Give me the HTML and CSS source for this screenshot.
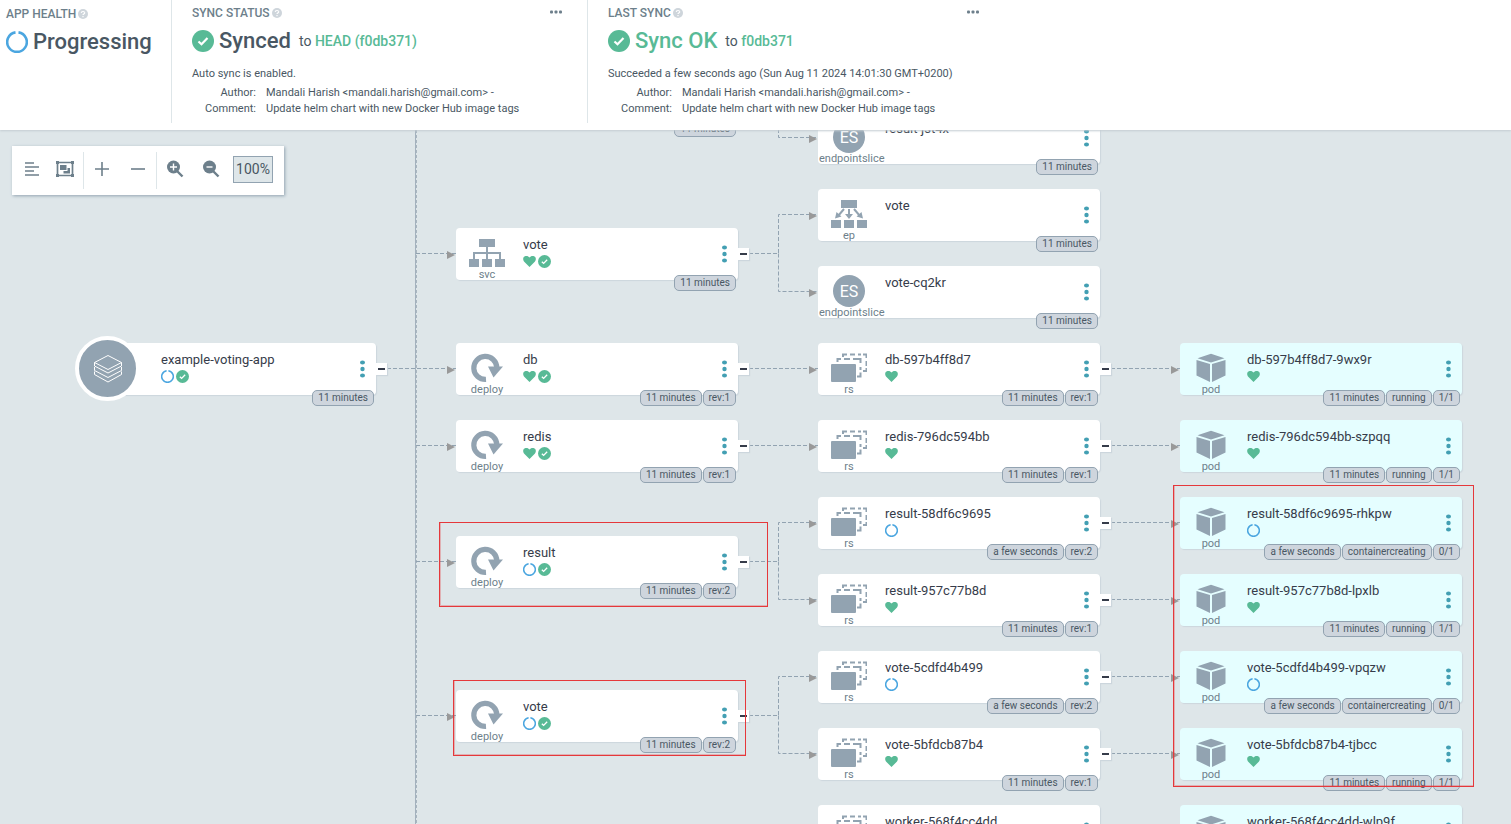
FILE: index.html
```html
<!DOCTYPE html>
<html lang="en">
<head>
<meta charset="utf-8">
<title>example-voting-app</title>
<link rel="stylesheet" href="styles.css">
</head>
<body>
<svg class="sprite" aria-hidden="true">
  <symbol id="i-heart" viewBox="0 0 13 13"><path fill="#58ba96" d="M6.500 12 L1 6.500 C-.5 4.500 0 1.500 2.500 1 C4.200 .7 5.700 1.300 6.500 2.500 C7.300 1.300 8.800 .7 10.500 1 C13 1.500 13.500 4.500 12 6.500 Z"/></symbol>
  <symbol id="i-check" viewBox="0 0 22 22"><circle cx="11" cy="11" r="11" fill="#58ba96"/><path d="M6.500 11.500 L9.500 14.300 L15.500 8" fill="none" stroke="#fff" stroke-width="2.200"/></symbol>
  <symbol id="i-ring" viewBox="0 0 22 22"><path d="M12.500 1.400 A9.800 9.800 0 1 1 9.500 1.400" fill="none" stroke="#4ba6e0" stroke-width="2.600"/></symbol>
  <symbol id="i-help" viewBox="0 0 10 10"><circle cx="5" cy="5" r="5" fill="#ced5db"/><path d="M3.200 3.900 C3.400 2 6.800 2.100 6.700 3.900 C6.600 5 5 4.900 5 6" fill="none" stroke="#fff" stroke-width="1.200"/><rect x="4.400" y="7" width="1.200" height="1.200" fill="#fff"/></symbol>
  <symbol id="i-more" viewBox="0 0 12 4"><g fill="#6d7f8b"><rect y=".5" width="3" height="3" rx="1"/><rect x="4.500" y=".5" width="3" height="3" rx="1"/><rect x="9" y=".5" width="3" height="3" rx="1"/></g></symbol>
  <symbol id="i-kebab" viewBox="0 0 5 18"><g fill="#439fb3"><ellipse cx="2.500" cy="2.500" rx="2.500" ry="2.100"/><circle cx="2.500" cy="9" r="2.200"/><ellipse cx="2.500" cy="15.500" rx="2.500" ry="2.100"/></g></symbol>
  <symbol id="i-svc" viewBox="0 0 36 30"><g fill="#92a3b1"><rect x="10" y="1" width="16" height="8"/><rect y="21" width="10" height="8"/><rect x="13" y="21" width="10" height="8"/><rect x="26" y="21" width="10" height="8"/></g><path d="M18 9 V21 M5 21 V15 H31 V21" fill="none" stroke="#92a3b1" stroke-width="2"/></symbol>
  <symbol id="i-ep" viewBox="0 0 36 30"><g fill="#92a3b1"><rect x="10" y="1" width="16" height="8"/><rect y="21" width="10" height="8"/><rect x="13" y="21" width="10" height="8"/><rect x="26" y="21" width="10" height="8"/><path d="M4 19.500 L5.500 13 L10.500 17.500 Z M32 19.500 L30.500 13 L25.500 17.500 Z M18 20 L14 15 H22 Z"/></g><path d="M13 10 L7 17 M23 10 L29 17 M18 10 V17" fill="none" stroke="#92a3b1" stroke-width="2"/></symbol>
  <symbol id="i-deploy" viewBox="0 0 36 30"><path d="M17 26.400 A11.500 11.500 0 1 1 27.800 14.500" fill="none" stroke="#92a3b1" stroke-width="5.200"/><path d="M19 13.500 H34 L24.500 24.500 Z" fill="#92a3b1"/></symbol>
  <symbol id="i-rs" viewBox="0 0 36 30"><rect y="11" width="25" height="18" rx="1" fill="#92a3b1"/><g fill="none" stroke="#92a3b1" stroke-width="2"><path d="M6.500 9 V6 H10 M13 6 H19 M22 6 H29.500 V10 M29.500 14 V17 M26 23.500 H29.500 V19.500"/><path d="M12 4 V1.500 H16 M19 1.500 H24 M27 1.500 H30 M32 1.500 H35.500 V5 M35.500 8 V13 M35.500 15 V18 H32"/></g></symbol>
  <symbol id="i-pod" viewBox="0 0 36 30"><path fill="#92a3b1" d="M18 .8 L31.500 5.300 L18 9.500 L4.500 5.300 Z M3.500 7 L17 11 V29 L3.500 22.500 Z M32.500 7 L19 11 V29 L32.500 22.500 Z"/></symbol>
  <symbol id="i-app" viewBox="0 0 30 30"><g fill="none" stroke="#fff"><path d="M15 1.500 L28.500 8.500 L15 15.500 L1.500 8.500 Z"/><path d="M1.500 8.500 V12 L15 19 L28.500 12 V8.500 M1.500 13 V16.500 L15 23.500 L28.500 16.500 V13 M1.500 17.500 V20.500 L15 28 L28.500 20.500 V17.500"/></g></symbol>
</svg>

<header class="status">
  <section class="panel panel-health">
    <h2 class="panel-title">APP HEALTH<svg class="help"><use href="#i-help"/></svg></h2>
    <div class="state"><svg class="state-icon"><use href="#i-ring"/></svg><span class="state-name">Progressing</span></div>
  </section>
  <section class="panel">
    <div class="panel-head"><h2 class="panel-title">SYNC STATUS<svg class="help"><use href="#i-help"/></svg></h2><button class="plain" aria-label="More"><svg class="more"><use href="#i-more"/></svg></button></div>
    <div class="state"><svg class="state-icon"><use href="#i-check"/></svg><span class="state-name">Synced</span><span class="target">to <a href="#">HEAD (f0db371)</a></span></div>
    <p class="note">Auto sync is enabled.</p>
    <dl class="meta"><dt>Author:</dt><dd>Mandali Harish &lt;mandali.harish@gmail.com&gt; -</dd><dt>Comment:</dt><dd>Update helm chart with new Docker Hub image tags</dd></dl>
  </section>
  <section class="panel">
    <div class="panel-head"><h2 class="panel-title">LAST SYNC<svg class="help"><use href="#i-help"/></svg></h2><button class="plain" aria-label="More"><svg class="more"><use href="#i-more"/></svg></button></div>
    <div class="state"><svg class="state-icon"><use href="#i-check"/></svg><span class="state-name ok">Sync OK</span><span class="target">to <a href="#">f0db371</a></span></div>
    <p class="note">Succeeded a few seconds ago (Sun Aug 11 2024 14:01:30 GMT+0200)</p>
    <dl class="meta"><dt>Author:</dt><dd>Mandali Harish &lt;mandali.harish@gmail.com&gt; -</dd><dt>Comment:</dt><dd>Update helm chart with new Docker Hub image tags</dd></dl>
  </section>
</header>

<main class="graph">
  <svg class="edges" aria-hidden="true">
    <defs><marker id="arrow" markerUnits="userSpaceOnUse" markerWidth="8" markerHeight="8" refX="0" refY="4" orient="auto"><path d="M0 0 L8 4 L0 8 Z" fill="#999"/></marker></defs>
    <path class="trunk" d="M415.500 0 V694"/>
    <path class="trunk trunk-dash" d="M416.500 0 V694"/>
    <g class="lines" transform="translate(0 -1)">
      <path d="M387 239.500 H456"/><path d="M416 124.500 H456"/><path d="M416 316.500 H456"/><path d="M416 432.500 H456"/><path d="M416 586.500 H456"/>
      <path d="M778.500 0 V8.500 H818"/>
      <path d="M749 124.500 H778.500 V85.500 H818"/><path d="M778.500 124.500 V162.500 H818"/>
      <path d="M749 239.500 H818"/><path d="M749 316.500 H818"/>
      <path d="M749 432.500 H778.500 V393.500 H818"/><path d="M778.500 432.500 V470.500 H818"/>
      <path d="M749 586.500 H778.500 V547.500 H818"/><path d="M778.500 586.500 V624.500 H818"/>
      <path d="M1111 239.500 H1180"/><path d="M1111 316.500 H1180"/><path d="M1111 393.500 H1180"/><path d="M1111 470.500 H1180"/><path d="M1111 547.500 H1180"/><path d="M1111 624.500 H1180"/>
    </g>
    <g class="heads">
      <path d="M447 125 h.1"/><path d="M447 240 h.1"/><path d="M447 317 h.1"/><path d="M447 433 h.1"/><path d="M447 587 h.1"/>
      <path d="M809 9 h.1"/><path d="M809 86 h.1"/><path d="M809 163 h.1"/><path d="M809 240 h.1"/><path d="M809 317 h.1"/><path d="M809 394 h.1"/><path d="M809 471 h.1"/><path d="M809 548 h.1"/><path d="M809 625 h.1"/>
      <path d="M1171 240 h.1"/><path d="M1171 317 h.1"/><path d="M1171 394 h.1"/><path d="M1171 471 h.1"/><path d="M1171 548 h.1"/><path d="M1171 625 h.1"/>
    </g>
  </svg>

  <article class="node" style="left:94px;top:213px">
    <div class="app-badge"><svg class="app-icon"><use href="#i-app"/></svg></div>
    <div class="kind"></div>
    <div class="info"><span class="name">example-voting-app</span><span class="marks"><svg><use href="#i-ring"/></svg><svg><use href="#i-check"/></svg></span></div>
    <button class="plain" aria-label="Actions"><svg class="kebab"><use href="#i-kebab"/></svg></button><button class="fold" aria-label="Collapse"></button>
    <div class="tags"><span>11 minutes</span></div>
  </article>

  <article class="node" style="left:456px;top:-56px">
    <div class="tags"><span>11 minutes</span></div>
  </article>
  <article class="node" style="left:456px;top:98px">
    <div class="kind"><svg class="kind-icon"><use href="#i-svc"/></svg><span>svc</span></div>
    <div class="info"><span class="name">vote</span><span class="marks"><svg><use href="#i-heart"/></svg><svg><use href="#i-check"/></svg></span></div>
    <button class="plain" aria-label="Actions"><svg class="kebab"><use href="#i-kebab"/></svg></button><button class="fold" aria-label="Collapse"></button>
    <div class="tags"><span>11 minutes</span></div>
  </article>
  <article class="node" style="left:456px;top:213px">
    <div class="kind"><svg class="kind-icon"><use href="#i-deploy"/></svg><span>deploy</span></div>
    <div class="info"><span class="name">db</span><span class="marks"><svg><use href="#i-heart"/></svg><svg><use href="#i-check"/></svg></span></div>
    <button class="plain" aria-label="Actions"><svg class="kebab"><use href="#i-kebab"/></svg></button><button class="fold" aria-label="Collapse"></button>
    <div class="tags"><span>11 minutes</span><span>rev:1</span></div>
  </article>
  <article class="node" style="left:456px;top:290px">
    <div class="kind"><svg class="kind-icon"><use href="#i-deploy"/></svg><span>deploy</span></div>
    <div class="info"><span class="name">redis</span><span class="marks"><svg><use href="#i-heart"/></svg><svg><use href="#i-check"/></svg></span></div>
    <button class="plain" aria-label="Actions"><svg class="kebab"><use href="#i-kebab"/></svg></button><button class="fold" aria-label="Collapse"></button>
    <div class="tags"><span>11 minutes</span><span>rev:1</span></div>
  </article>
  <article class="node" style="left:456px;top:406px">
    <div class="kind"><svg class="kind-icon"><use href="#i-deploy"/></svg><span>deploy</span></div>
    <div class="info"><span class="name">result</span><span class="marks"><svg><use href="#i-ring"/></svg><svg><use href="#i-check"/></svg></span></div>
    <button class="plain" aria-label="Actions"><svg class="kebab"><use href="#i-kebab"/></svg></button><button class="fold" aria-label="Collapse"></button>
    <div class="tags"><span>11 minutes</span><span>rev:2</span></div>
  </article>
  <article class="node" style="left:456px;top:560px">
    <div class="kind"><svg class="kind-icon"><use href="#i-deploy"/></svg><span>deploy</span></div>
    <div class="info"><span class="name">vote</span><span class="marks"><svg><use href="#i-ring"/></svg><svg><use href="#i-check"/></svg></span></div>
    <button class="plain" aria-label="Actions"><svg class="kebab"><use href="#i-kebab"/></svg></button><button class="fold" aria-label="Collapse"></button>
    <div class="tags"><span>11 minutes</span><span>rev:2</span></div>
  </article>

  <article class="node" style="left:818px;top:-18px">
    <div class="kind"><b class="initials">ES</b><span>endpointslice</span></div>
    <div class="info"><span class="name">result-jst4x</span></div>
    <button class="plain" aria-label="Actions"><svg class="kebab"><use href="#i-kebab"/></svg></button>
    <div class="tags"><span>11 minutes</span></div>
  </article>
  <article class="node" style="left:818px;top:59px">
    <div class="kind"><svg class="kind-icon"><use href="#i-ep"/></svg><span>ep</span></div>
    <div class="info"><span class="name">vote</span></div>
    <button class="plain" aria-label="Actions"><svg class="kebab"><use href="#i-kebab"/></svg></button>
    <div class="tags"><span>11 minutes</span></div>
  </article>
  <article class="node" style="left:818px;top:136px">
    <div class="kind"><b class="initials">ES</b><span>endpointslice</span></div>
    <div class="info"><span class="name">vote-cq2kr</span></div>
    <button class="plain" aria-label="Actions"><svg class="kebab"><use href="#i-kebab"/></svg></button>
    <div class="tags"><span>11 minutes</span></div>
  </article>
  <article class="node" style="left:818px;top:213px">
    <div class="kind"><svg class="kind-icon"><use href="#i-rs"/></svg><span>rs</span></div>
    <div class="info"><span class="name">db-597b4ff8d7</span><span class="marks"><svg><use href="#i-heart"/></svg></span></div>
    <button class="plain" aria-label="Actions"><svg class="kebab"><use href="#i-kebab"/></svg></button><button class="fold" aria-label="Collapse"></button>
    <div class="tags"><span>11 minutes</span><span>rev:1</span></div>
  </article>
  <article class="node" style="left:818px;top:290px">
    <div class="kind"><svg class="kind-icon"><use href="#i-rs"/></svg><span>rs</span></div>
    <div class="info"><span class="name">redis-796dc594bb</span><span class="marks"><svg><use href="#i-heart"/></svg></span></div>
    <button class="plain" aria-label="Actions"><svg class="kebab"><use href="#i-kebab"/></svg></button><button class="fold" aria-label="Collapse"></button>
    <div class="tags"><span>11 minutes</span><span>rev:1</span></div>
  </article>
  <article class="node" style="left:818px;top:367px">
    <div class="kind"><svg class="kind-icon"><use href="#i-rs"/></svg><span>rs</span></div>
    <div class="info"><span class="name">result-58df6c9695</span><span class="marks"><svg><use href="#i-ring"/></svg></span></div>
    <button class="plain" aria-label="Actions"><svg class="kebab"><use href="#i-kebab"/></svg></button><button class="fold" aria-label="Collapse"></button>
    <div class="tags"><span>a few seconds</span><span>rev:2</span></div>
  </article>
  <article class="node" style="left:818px;top:444px">
    <div class="kind"><svg class="kind-icon"><use href="#i-rs"/></svg><span>rs</span></div>
    <div class="info"><span class="name">result-957c77b8d</span><span class="marks"><svg><use href="#i-heart"/></svg></span></div>
    <button class="plain" aria-label="Actions"><svg class="kebab"><use href="#i-kebab"/></svg></button><button class="fold" aria-label="Collapse"></button>
    <div class="tags"><span>11 minutes</span><span>rev:1</span></div>
  </article>
  <article class="node" style="left:818px;top:521px">
    <div class="kind"><svg class="kind-icon"><use href="#i-rs"/></svg><span>rs</span></div>
    <div class="info"><span class="name">vote-5cdfd4b499</span><span class="marks"><svg><use href="#i-ring"/></svg></span></div>
    <button class="plain" aria-label="Actions"><svg class="kebab"><use href="#i-kebab"/></svg></button><button class="fold" aria-label="Collapse"></button>
    <div class="tags"><span>a few seconds</span><span>rev:2</span></div>
  </article>
  <article class="node" style="left:818px;top:598px">
    <div class="kind"><svg class="kind-icon"><use href="#i-rs"/></svg><span>rs</span></div>
    <div class="info"><span class="name">vote-5bfdcb87b4</span><span class="marks"><svg><use href="#i-heart"/></svg></span></div>
    <button class="plain" aria-label="Actions"><svg class="kebab"><use href="#i-kebab"/></svg></button><button class="fold" aria-label="Collapse"></button>
    <div class="tags"><span>11 minutes</span><span>rev:1</span></div>
  </article>
  <article class="node" style="left:818px;top:675px">
    <div class="kind"><svg class="kind-icon"><use href="#i-rs"/></svg></div>
    <div class="info"><span class="name">worker-568f4cc4dd</span></div>
    <button class="plain" aria-label="Actions"><svg class="kebab"><use href="#i-kebab"/></svg></button>
  </article>

  <article class="node pod" style="left:1180px;top:213px">
    <div class="kind"><svg class="kind-icon"><use href="#i-pod"/></svg><span>pod</span></div>
    <div class="info"><span class="name">db-597b4ff8d7-9wx9r</span><span class="marks"><svg><use href="#i-heart"/></svg></span></div>
    <button class="plain" aria-label="Actions"><svg class="kebab"><use href="#i-kebab"/></svg></button>
    <div class="tags"><span>11 minutes</span><span>running</span><span>1/1</span></div>
  </article>
  <article class="node pod" style="left:1180px;top:290px">
    <div class="kind"><svg class="kind-icon"><use href="#i-pod"/></svg><span>pod</span></div>
    <div class="info"><span class="name">redis-796dc594bb-szpqq</span><span class="marks"><svg><use href="#i-heart"/></svg></span></div>
    <button class="plain" aria-label="Actions"><svg class="kebab"><use href="#i-kebab"/></svg></button>
    <div class="tags"><span>11 minutes</span><span>running</span><span>1/1</span></div>
  </article>
  <article class="node pod" style="left:1180px;top:367px">
    <div class="kind"><svg class="kind-icon"><use href="#i-pod"/></svg><span>pod</span></div>
    <div class="info"><span class="name">result-58df6c9695-rhkpw</span><span class="marks"><svg><use href="#i-ring"/></svg></span></div>
    <button class="plain" aria-label="Actions"><svg class="kebab"><use href="#i-kebab"/></svg></button>
    <div class="tags"><span>a few seconds</span><span>containercreating</span><span>0/1</span></div>
  </article>
  <article class="node pod" style="left:1180px;top:444px">
    <div class="kind"><svg class="kind-icon"><use href="#i-pod"/></svg><span>pod</span></div>
    <div class="info"><span class="name">result-957c77b8d-lpxlb</span><span class="marks"><svg><use href="#i-heart"/></svg></span></div>
    <button class="plain" aria-label="Actions"><svg class="kebab"><use href="#i-kebab"/></svg></button>
    <div class="tags"><span>11 minutes</span><span>running</span><span>1/1</span></div>
  </article>
  <article class="node pod" style="left:1180px;top:521px">
    <div class="kind"><svg class="kind-icon"><use href="#i-pod"/></svg><span>pod</span></div>
    <div class="info"><span class="name">vote-5cdfd4b499-vpqzw</span><span class="marks"><svg><use href="#i-ring"/></svg></span></div>
    <button class="plain" aria-label="Actions"><svg class="kebab"><use href="#i-kebab"/></svg></button>
    <div class="tags"><span>a few seconds</span><span>containercreating</span><span>0/1</span></div>
  </article>
  <article class="node pod" style="left:1180px;top:598px">
    <div class="kind"><svg class="kind-icon"><use href="#i-pod"/></svg><span>pod</span></div>
    <div class="info"><span class="name">vote-5bfdcb87b4-tjbcc</span><span class="marks"><svg><use href="#i-heart"/></svg></span></div>
    <button class="plain" aria-label="Actions"><svg class="kebab"><use href="#i-kebab"/></svg></button>
    <div class="tags"><span>11 minutes</span><span>running</span><span>1/1</span></div>
  </article>
  <article class="node pod" style="left:1180px;top:675px">
    <div class="kind"><svg class="kind-icon"><use href="#i-pod"/></svg></div>
    <div class="info"><span class="name">worker-568f4cc4dd-wlp9f</span></div>
    <button class="plain" aria-label="Actions"><svg class="kebab"><use href="#i-kebab"/></svg></button>
  </article>

  <div class="mark mark-result"></div>
  <div class="mark mark-vote"></div>
  <div class="mark mark-pods"></div>

  <div class="toolbar">
    <div class="group">
      <button class="plain" aria-label="Align"><svg viewBox="0 0 18 18"><path d="M2 3 H11 M2 7 H16 M2 11 H11 M2 15 H16" stroke="#6d7f8b" stroke-width="1.700"/></svg></button>
      <button class="plain" aria-label="Group nodes"><svg viewBox="0 0 18 18"><path d="M1.500 2.500 H16.500 V15.500 H1.500 Z" fill="none" stroke="#6d7f8b" stroke-width="1.700"/><path fill="#6d7f8b" d="M0 1 h3 v3 H0 Z M15 1 H18 v3 h-3 Z M0 14 h3 v3 H0 Z M15 14 H18 v3 h-3 Z M4 5 h6.500 v5 H4 Z M11.500 8 H14 v5.500 H7.500 V11 h4 Z"/></svg></button>
    </div>
    <div class="group">
      <button class="plain" aria-label="Expand"><svg viewBox="0 0 18 18"><path d="M9 2 V16 M2 9 H16" stroke="#6d7f8b" stroke-width="1.600"/></svg></button>
      <button class="plain" aria-label="Collapse"><svg viewBox="0 0 18 18"><path d="M2 9 H16" stroke="#6d7f8b" stroke-width="1.600"/></svg></button>
    </div>
    <div class="group">
      <button class="plain" aria-label="Zoom in"><svg viewBox="0 0 18 18"><circle cx="7.500" cy="7" r="6.500" fill="#6d7f8b"/><path d="M11 11 L16.500 16.500" stroke="#6d7f8b" stroke-width="2.400"/><path d="M7.500 3.500 V10.500 M4 7 H11" stroke="#fff" stroke-width="1.400"/></svg></button>
      <button class="plain" aria-label="Zoom out"><svg viewBox="0 0 18 18"><circle cx="7.500" cy="7" r="6.500" fill="#6d7f8b"/><path d="M11 11 L16.500 16.500" stroke="#6d7f8b" stroke-width="2.400"/><path d="M4.500 7 H10.500" stroke="#fff" stroke-width="1.400"/></svg></button>
      <input class="zoom" value="100%" aria-label="Zoom level">
    </div>
  </div>
</main>
</body>
</html>
```
FILE: styles.css
```css
* { box-sizing: border-box; }
body {
  margin: 0;
  height: 100vh;
  display: flex;
  flex-direction: column;
  overflow: hidden;
  font: 11px/16px Roboto, "Liberation Sans", sans-serif;
  color: #495763;
  background: #dee6e9;
}
svg { display: block; flex: none; }
.sprite { position: absolute; width: 0; height: 0; }
.plain { border: 0; padding: 0; background: none; cursor: pointer; }
a { color: #58ba96; text-decoration: none; }

/* status header */
.status {
  display: flex;
  position: relative;
  z-index: 1;
  padding-bottom: 7px;
  background: #fff;
  box-shadow: 0 1px 2px #c3ccd2;
}
.panel { width: 416px; padding: 5px 25px 6px 20px; border-right: 1px solid #dee6e9; }
.panel:last-child { border-right: 0; }
.panel-health { width: 172px; padding: 6px 0 0 6px; }
.panel-head { display: flex; justify-content: space-between; }
.panel-title {
  display: flex;
  align-items: center;
  margin: 0;
  font-size: 12px;
  line-height: 16px;
  font-weight: 500;
  color: #6d7f8b;
}
.help { width: 10px; height: 10px; margin-left: 2px; }
.more { width: 12px; height: 4px; margin-bottom: 2px; }
.state { display: flex; align-items: center; height: 40px; }
.state-icon { width: 22px; height: 22px; margin-right: 5px; }
.state-name { font-size: 22px; font-weight: 500; }
.ok { color: #58ba96; }
.target { margin-left: 8px; font-size: 14px; }
.target a { font-weight: 500; }
.note { margin: 5px 0 3px; }
.meta { display: grid; grid-template-columns: 64px 1fr; column-gap: 10px; margin: 0; }
.meta dt { text-align: right; }
.meta dd { margin: 0; }

/* resource tree */
.graph { position: relative; flex: 1; overflow: hidden; }
.edges { position: absolute; left: 0; top: 0; width: 100%; height: 100%; }
.lines path { fill: none; stroke: #92a3b1; stroke-dasharray: 4 2; }
.trunk { fill: none; stroke: #a3b1bd; }
.trunk-dash { stroke: #a9b6c0; stroke-dasharray: 3 2; }
.heads path { marker-start: url(#arrow); }
.node {
  position: absolute;
  display: flex;
  align-items: flex-start;
  width: 282px;
  height: 52px;
  padding-right: 11px;
  border-radius: 4px;
  background: #fff;
  box-shadow: 1px 1px 1px #ccd6dd;
}
.pod { background: #e5feff; }
.kind {
  display: flex;
  flex-direction: column;
  align-items: center;
  width: 62px;
  padding-top: 10px;
  color: #6d7f8b;
}
.kind span { width: 60px; text-align: center; white-space: nowrap; font-size: 11px; line-height: 14px; }
.kind-icon { width: 36px; height: 30px; }
.initials {
  width: 32px;
  height: 32px;
  margin: -1px 0;
  border-radius: 50%;
  background: #92a3b1;
  color: #fff;
  font-size: 16px;
  line-height: 33px;
  font-weight: 400;
  text-align: center;
}
.info { flex: 1; padding: 9px 0 0 5px; color: #363c4a; }
.name { display: block; font-size: 13px; line-height: 16px; white-space: nowrap; }
.marks { display: flex; gap: 2px; padding-top: 2px; }
.marks svg { width: 13px; height: 13px; }
.kebab { width: 5px; height: 18px; margin-top: 17px; }
.fold {
  position: absolute;
  right: -11px;
  top: 20px;
  width: 11px;
  height: 12px;
  padding: 0;
  border: 0;
  background: linear-gradient(#363c4a, #363c4a) center / 7px 2px no-repeat #fff;
  box-shadow: 1px 1px 1px #ccd6dd;
}
.tags { position: absolute; right: 2px; bottom: -11px; display: flex; gap: 1px; }
.tags span {
  padding: 0 5px;
  border: 1px solid #92a3b1;
  border-radius: 5px;
  background: #ced5dd;
  color: #495763;
  font-size: 10px;
  line-height: 14px;
  white-space: nowrap;
}
.app-badge {
  position: absolute;
  left: -19px;
  top: -7px;
  display: grid;
  place-items: center;
  width: 65px;
  height: 65px;
  border: 4px solid #fff;
  border-radius: 50%;
  background: #92a3b1;
}
.app-icon { width: 30px; height: 30px; }

/* highlight frames */
.mark {
  position: absolute;
  border: 1px solid #e5383b;
  box-shadow: inset 1px -1px rgba(229, 56, 59, .3);
  pointer-events: none;
}
.mark-result { left: 439px; top: 392px; width: 329px; height: 85px; }
.mark-vote { left: 453px; top: 550px; width: 293px; height: 76px; }
.mark-pods { left: 1173px; top: 355px; width: 301px; height: 302px; }

/* canvas tools */
.toolbar {
  position: absolute;
  left: 12px;
  top: 16px;
  display: flex;
  padding: 6px 11px 6px 0;
  background: #fff;
  box-shadow: 1px 1px 3px #92a3b1;
}
.group { display: flex; align-items: center; gap: 18px; height: 37px; padding: 0 9px 3px; border-right: 1px solid #dee6e9; }
.group:first-child { gap: 15px; padding-left: 11px; }
.group:last-child { border: 0; padding-right: 0; }
.group svg { width: 18px; height: 18px; }
.zoom {
  width: 40px;
  height: 27px;
  margin-left: -5px;
  padding: 0;
  border: 1px solid #92a3b1;
  background: #dee6e9;
  font: 14px Roboto, "Liberation Sans", sans-serif;
  color: #495763;
  text-align: center;
}
```
